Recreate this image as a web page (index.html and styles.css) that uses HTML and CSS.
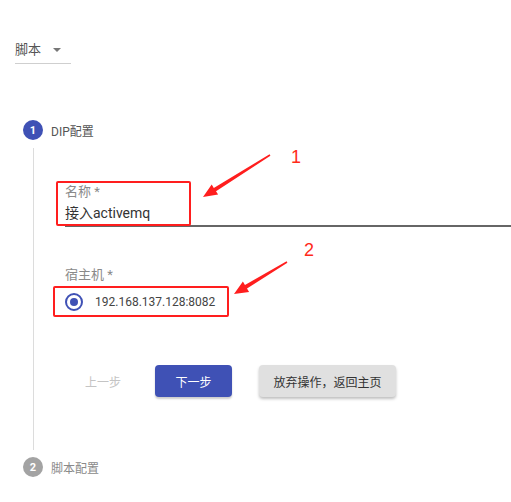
FILE: index.html
```html
<!DOCTYPE html>
<html>
<head>
<meta charset="utf-8">
<link rel="stylesheet" href="styles.css">
</head>
<body>
<div class="page">
  <div class="select">
    <span class="select-value">脚本</span>
    <span class="select-arrow"></span>
  </div>

  <div class="stepper">
    <div class="step-header">
      <span class="step-num active">1</span>
      <span class="step-label">DIP配置</span>
    </div>
    <div class="step-body">
      <div class="field">
        <div class="field-label">名称 *</div>
        <div class="field-value">接入activemq</div>
        <div class="field-line"></div>
      </div>
      <div class="radio-group">
        <div class="field-label">宿主机 *</div>
        <div class="radio-row">
          <span class="radio"><span class="radio-dot"></span></span>
          <span class="radio-text">192.168.137.128:8082</span>
        </div>
      </div>
      <div class="actions">
        <button class="btn btn-flat">上一步</button>
        <button class="btn btn-primary">下一步</button>
        <button class="btn btn-grey">放弃操作，返回主页</button>
      </div>
    </div>
    <div class="step-header">
      <span class="step-num inactive">2</span>
      <span class="step-label muted">脚本配置</span>
    </div>
  </div>

  <div class="mark mark-1"></div>
  <div class="mark mark-2"></div>
  <span class="mark-num num-1">1</span>
  <span class="mark-num num-2">2</span>
  <svg class="arrows" width="511" height="502" viewBox="0 0 511 502">
    <polygon fill="#ff1e1e" points="269.6,154.3 213.8,187.9 211.7,184.5 203,197 218.1,194.6 216.0,191.2 270.4,155.7"/>
    <polygon fill="#ff1e1e" points="286.6,261.3 244.95,285.05 242.9,281.6 234,294 249.1,291.9 247.0,288.5 287.4,262.7"/>
  </svg>
</div>
</body>
</html>
```

FILE: styles.css
```css
* { box-sizing: border-box; }
html, body {
  margin: 0;
  padding: 0;
  background: #fff;
}
body {
  width: 511px;
  height: 502px;
  overflow: hidden;
  font-family: Roboto, "Noto Sans CJK SC", sans-serif;
  color: #333;
}
.page {
  position: relative;
  width: 511px;
  height: 502px;
  padding-top: 40px;
  overflow: hidden;
}
.select {
  margin: 0 0 0 15px;
  width: 56px;
  height: 24px;
  border-bottom: 1px solid #cfcfcf;
  display: flex;
  align-items: center;
  padding-bottom: 4px;
}
.select-value {
  font-size: 13px;
  line-height: 20px;
  color: #555;
}
.select-arrow {
  margin-left: 12px;
  width: 0;
  height: 0;
  border-left: 4px solid transparent;
  border-right: 4px solid transparent;
  border-top: 4px solid #777;
}
.stepper {
  margin: 56px 0 0 23px;
}
.step-header {
  display: flex;
  align-items: center;
  height: 20px;
  gap: 8px;
}
.step-num {
  width: 20px;
  height: 20px;
  border-radius: 50%;
  color: #fff;
  font-size: 11px;
  font-weight: 700;
  display: flex;
  align-items: center;
  justify-content: center;
}
.step-num.active { background: #3f51b5; }
.step-num.inactive { background: #a3a3a3; }
.step-label {
  font-size: 12px;
  color: #555;
}
.step-label.muted { color: #8a8a8a; }
.step-body {
  margin: 8px 0 7px 10px;
  border-left: 1px solid #dcdcdc;
  padding: 36px 0 53px 31px;
  height: 302px;
}
.field {
  display: flex;
  flex-direction: column;
}
.field-label {
  font-size: 13px;
  line-height: 16px;
  color: #8a8a8a;
}
.field-value {
  margin-top: 3px;
  font-size: 14px;
  line-height: 20px;
  color: #333;
}
.field-line {
  margin-top: 2px;
  height: 2px;
  background: #666;
  width: 460px;
}
.radio-group {
  margin-top: 40px;
}
.radio-row {
  margin-top: 9px;
  display: flex;
  align-items: center;
  height: 20px;
}
.radio {
  width: 18px;
  height: 18px;
  border: 2px solid #3f51b5;
  border-radius: 50%;
  display: flex;
  align-items: center;
  justify-content: center;
}
.radio-dot {
  width: 8px;
  height: 8px;
  border-radius: 50%;
  background: #3f51b5;
}
.radio-text {
  margin-left: 12px;
  font-size: 12px;
  color: #444;
}
.actions {
  margin-top: 53px;
  display: flex;
  align-items: center;
}
.btn {
  height: 32px;
  border: none;
  border-radius: 4px;
  font-family: Roboto, "Noto Sans CJK SC", sans-serif;
  font-size: 12px;
  padding: 0 20px;
  cursor: pointer;
}
.btn-flat {
  background: transparent;
  color: #c4c4c4;
}
.btn-primary {
  margin-left: 14px;
  width: 77px;
  background: #3f51b5;
  color: #fff;
  box-shadow: 0 2px 2px rgba(0,0,0,0.2);
}
.btn-grey {
  margin-left: 27px;
  width: 137px;
  padding: 0 14px;
  background: #e0e0e0;
  color: #333;
  box-shadow: 0 2px 3px rgba(0,0,0,0.25);
}
.mark {
  position: absolute;
  border: 2px solid #ff1e1e;
  border-radius: 2px;
}
.mark-1 { left: 56px; top: 181px; width: 135px; height: 45px; }
.mark-2 { left: 53px; top: 286px; width: 176px; height: 31px; }
.mark-num {
  position: absolute;
  font-family: "Liberation Sans", Arial, sans-serif;
  font-size: 18px;
  line-height: 18px;
  color: #ff2a1a;
}
.num-1 { left: 291px; top: 148px; }
.num-2 { left: 304px; top: 241px; }
.arrows {
  position: absolute;
  left: 0;
  top: 0;
  pointer-events: none;
}
```
